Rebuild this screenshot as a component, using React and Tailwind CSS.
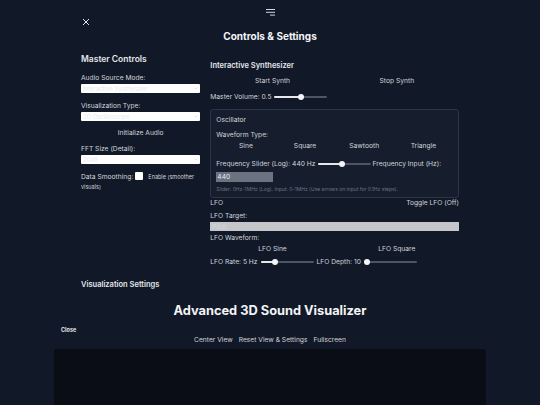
import React from 'react'

function Slider({ pos }) {
  return (
    <div className="relative w-[53px] h-[6px] flex items-center">
      <div className="w-full h-[2px] rounded-full bg-[#4b5563]" />
      <div className="absolute left-0 h-[2px] rounded-full bg-[#e5e7eb]" style={{ width: pos + 'px' }} />
      <div className="absolute w-[6px] h-[6px] rounded-full bg-[#f3f4f6]" style={{ left: pos - 3 + 'px' }} />
    </div>
  )
}

function FakeSelect({ value }) {
  return (
    <div className="mt-[1px] h-[9px] bg-white flex items-center justify-between px-[2px] rounded-[1px]">
      <span className="text-[6px] leading-[9px] text-[#e8ebef]">{value}</span>
      <svg width="4" height="3" viewBox="0 0 4 3"><path d="M0.5 0.5 L2 2 L3.5 0.5" fill="none" stroke="#d1d5db" strokeWidth="0.6" /></svg>
    </div>
  )
}

export default function App() {
  return (
    <div className="h-[405px] overflow-hidden bg-[#111827] text-[#d1d5db] font-['Inter',sans-serif]">
      <div className="flex justify-center pt-[9px]">
        <svg width="9" height="7" viewBox="0 0 9 7">
          <rect x="0" y="0" width="9" height="1" fill="#cbd5e1" />
          <rect x="0" y="2.8" width="9" height="1" fill="#cbd5e1" />
          <rect x="4" y="5.6" width="5" height="1" fill="#cbd5e1" />
        </svg>
      </div>

      <div className="w-[378px] mx-auto">
        <div className="mt-[2px] pl-[1px]">
          <svg width="8" height="8" viewBox="0 0 8 8">
            <path d="M1 1 L7 7 M7 1 L1 7" stroke="#e5e7eb" strokeWidth="1" />
          </svg>
        </div>
        <h2 className="mt-[4px] text-center text-[10px] leading-[12px] font-bold text-[#f3f4f6]">Controls &amp; Settings</h2>

        <div className="mt-[11px] grid grid-cols-3 gap-x-[10px]">
          {/* left column */}
          <div className="text-[6.7px] leading-[10px]">
            <h3 className="text-[8.5px] leading-[12px] font-semibold text-[#e5e7eb]">Master Controls</h3>
            <div className="mt-[8px]">Audio Source Mode:</div>
            <FakeSelect value="Interactive Synthesizer" />
            <div className="mt-[8px]">Visualization Type:</div>
            <FakeSelect value="2D Oscilloscope" />
            <div className="mt-[7px] text-center">Initialize Audio</div>
            <div className="mt-[6px]">FFT Size (Detail):</div>
            <FakeSelect value="2048" />
            <div className="mt-[8px]">
              Data Smoothing:
              <span className="inline-block align-middle w-[8px] h-[8px] bg-white rounded-[1px] ml-[2px] mr-[5px] -mt-[2px]" />
              <span className="text-[5.5px]"><span className="whitespace-nowrap">Enable (smoother</span> visuals)</span>
            </div>
          </div>

          {/* right column */}
          <div className="col-span-2 text-[6.7px] leading-[10px]">
            <h3 className="mt-[7px] text-[7.5px] leading-[12px] font-semibold text-[#e5e7eb]">Interactive Synthesizer</h3>
            <div className="mt-[4px] grid grid-cols-2 text-center">
              <span>Start Synth</span>
              <span>Stop Synth</span>
            </div>
            <div className="mt-[6px] flex items-center gap-[3px]">
              <span>Master Volume: 0.5</span>
              <Slider pos={27} />
            </div>

            <div className="mt-[7px] border border-[#2b3545] bg-[#161e2e] rounded-[3px] px-[5px] pt-[5px] pb-[4px]">
              <div>Oscillator</div>
              <div className="mt-[5px]">Waveform Type:</div>
              <div className="mt-[1px] grid grid-cols-4 text-center">
                <span>Sine</span>
                <span>Square</span>
                <span>Sawtooth</span>
                <span>Triangle</span>
              </div>
              <div className="mt-[8px] flex flex-wrap items-center gap-x-[2px] gap-y-[3px]">
                <span>Frequency Slider (Log): 440 Hz</span>
                <Slider pos={24} />
                <span>Frequency Input (Hz):</span>
                <div className="w-[57px] h-[10px] bg-[#6b7280] text-[#e5e7eb] px-[1px] leading-[10px]">440</div>
              </div>
              <div className="mt-[4px] text-[5px] leading-[7px] text-[#6b7280]">
                Slider: 0Hz-1MHz (Log). Input: 0-1MHz (Use arrows on input for 0.1Hz steps).
              </div>
            </div>

            <div className="flex justify-between">
              <span>LFO</span>
              <span>Toggle LFO (Off)</span>
            </div>
            <div className="mt-[3px]">LFO Target:</div>
            <div className="mt-[1px] h-[9px] bg-[#c4c6ca] px-[2px] text-[6px] leading-[9px] text-[#d6d8db]">Pitch</div>
            <div className="mt-[2px]">LFO Waveform:</div>
            <div className="mt-[1px] grid grid-cols-2 text-center">
              <span>LFO Sine</span>
              <span>LFO Square</span>
            </div>
            <div className="mt-[3px] flex items-center gap-[3px]">
              <span>LFO Rate: 5 Hz</span>
              <Slider pos={14} />
              <span>LFO Depth: 10</span>
              <Slider pos={3} />
            </div>
          </div>
        </div>

        <h3 className="mt-[12px] text-[7.5px] leading-[12px] font-semibold text-[#e5e7eb]">Visualization Settings</h3>
      </div>

      <h1 className="mt-[10px] text-center text-[12.8px] leading-[20px] font-bold text-[#f3f4f6]">Advanced 3D Sound Visualizer</h1>
      <div className="mt-[5px] pl-[61px] text-[5.5px] leading-[8px] font-bold text-[#e5e7eb]">Close</div>
      <div className="mt-[1px] flex justify-center gap-[6px] text-[6.7px] leading-[10px] text-[#d1d5db]">
        <span>Center View</span>
        <span>Reset View &amp; Settings</span>
        <span>Fullscreen</span>
      </div>
      <div className="mt-[4px] mx-auto w-[432px] h-[70px] bg-[#0b0d16] rounded-[3px]" />
    </div>
  )
}
